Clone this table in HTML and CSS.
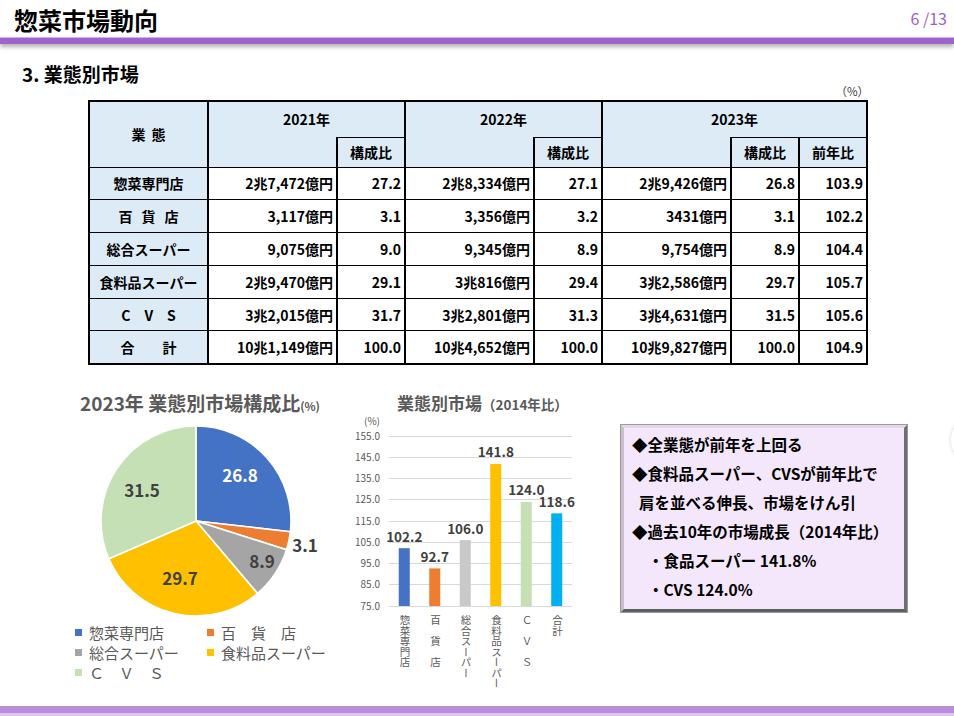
FILE: index.html
```html
<!DOCTYPE html>
<html lang="ja">
<head>
<meta charset="utf-8">
<title>惣菜市場動向</title>
<link rel="stylesheet" href="styles.css">
</head>
<body>
<header class="top">
  <h1 class="title">惣菜市場動向</h1>
  <div class="page">6 /13</div>
</header>
<div class="rule"></div>
<h2 class="section">3. 業態別市場</h2>
<div class="table-wrap">
  <div class="unit">（%）</div>
  <table class="market">
    <colgroup>
      <col class="c-name"><col class="c-val"><col class="c-pct"><col class="c-val"><col class="c-pct"><col class="c-val"><col class="c-pct"><col class="c-pct">
    </colgroup>
    <thead>
      <tr class="h1">
        <th rowspan="2" class="name-h"><span class="sp-gyo">業態</span></th>
        <th colspan="2" class="yr">2021年</th>
        <th colspan="2" class="yr">2022年</th>
        <th colspan="3" class="yr">2023年</th>
      </tr>
      <tr class="h2">
        <th class="blank"></th><th class="sub">構成比</th>
        <th class="blank"></th><th class="sub">構成比</th>
        <th class="blank"></th><th class="sub">構成比</th><th class="sub">前年比</th>
      </tr>
    </thead>
    <tbody>
      <tr><th>惣菜専門店</th><td>2兆7,472億円</td><td>27.2</td><td>2兆8,334億円</td><td>27.1</td><td>2兆9,426億円</td><td>26.8</td><td>103.9</td></tr>
      <tr><th><span class="sp-hyaku">百貨店</span></th><td>3,117億円</td><td>3.1</td><td>3,356億円</td><td>3.2</td><td>3431億円</td><td>3.1</td><td>102.2</td></tr>
      <tr><th>総合スーパー</th><td>9,075億円</td><td>9.0</td><td>9,345億円</td><td>8.9</td><td>9,754億円</td><td>8.9</td><td>104.4</td></tr>
      <tr><th>食料品スーパー</th><td>2兆9,470億円</td><td>29.1</td><td>3兆816億円</td><td>29.4</td><td>3兆2,586億円</td><td>29.7</td><td>105.7</td></tr>
      <tr><th>C　V　S</th><td>3兆2,015億円</td><td>31.7</td><td>3兆2,801億円</td><td>31.3</td><td>3兆4,631億円</td><td>31.5</td><td>105.6</td></tr>
      <tr><th>合　　計</th><td>10兆1,149億円</td><td>100.0</td><td>10兆4,652億円</td><td>100.0</td><td>10兆9,827億円</td><td>100.0</td><td>104.9</td></tr>
    </tbody>
  </table>
</div>

<section class="bottom">
  <div class="pie-block">
    <div class="pie-title">2023年 業態別市場構成比<small>(%)</small></div>
    <svg class="pie" width="230" height="200" viewBox="0 0 230 200">
      <g stroke="#fff" stroke-width="1.6" stroke-linejoin="round">
        <path fill="#4472c4" d="M100,100 L100,5 A95,95 0 0 1 194.39,110.72 Z"/>
        <path fill="#ed7d31" d="M100,100 L194.39,110.72 A95,95 0 0 1 190.53,128.79 Z"/>
        <path fill="#a5a5a5" d="M100,100 L190.53,128.79 A95,95 0 0 1 161.47,172.44 Z"/>
        <path fill="#ffc000" d="M100,100 L161.47,172.44 A95,95 0 0 1 12.81,137.73 Z"/>
        <path fill="#c5e0b4" d="M100,100 L12.81,137.73 A95,95 0 0 1 100,5 Z"/>
      </g>
      <g class="pie-lbl" text-anchor="middle">
        <text x="144" y="61" class="on-blue">26.8</text>
        <text x="46" y="76">31.5</text>
        <text x="84" y="164">29.7</text>
        <text x="166" y="147">8.9</text>
        <text x="209" y="131">3.1</text>
      </g>
    </svg>
    <div class="legend">
      <div class="lg"><i class="sq c-blue"></i>惣菜専門店</div>
      <div class="lg"><i class="sq c-orange"></i>百　貨　店</div>
      <div class="lg"><i class="sq c-grey"></i>総合スーパー</div>
      <div class="lg"><i class="sq c-yellow"></i>食料品スーパー</div>
      <div class="lg"><i class="sq c-green"></i>Ｃ　Ｖ　Ｓ</div>
    </div>
  </div>

  <div class="bar-block">
    <div class="bar-title">業態別市場<small>（2014年比）</small></div>
    <div class="bar-unit">(%)</div>
    <svg class="bars" width="230" height="185" viewBox="0 10 230 185">
      <g stroke="#d9d9d9" stroke-width="1">
        <line x1="37" x2="220" y1="19.5" y2="19.5"/>
        <line x1="37" x2="220" y1="40.5" y2="40.5"/>
        <line x1="37" x2="220" y1="61.5" y2="61.5"/>
        <line x1="37" x2="220" y1="82.5" y2="82.5"/>
        <line x1="37" x2="220" y1="104.5" y2="104.5"/>
        <line x1="37" x2="220" y1="125.5" y2="125.5"/>
        <line x1="37" x2="220" y1="146.5" y2="146.5"/>
        <line x1="37" x2="220" y1="167.5" y2="167.5"/>
        <line x1="37" x2="220" y1="189.5" y2="189.5"/>
      </g>
      <g class="ylbl" text-anchor="end">
        <text x="28" y="23">155.0</text>
        <text x="28" y="44">145.0</text>
        <text x="28" y="65">135.0</text>
        <text x="28" y="86">125.0</text>
        <text x="28" y="108">115.0</text>
        <text x="28" y="129">105.0</text>
        <text x="28" y="150">95.0</text>
        <text x="28" y="171">85.0</text>
        <text x="28" y="193">75.0</text>
      </g>
      <rect x="46.75" y="131.2" width="11" height="57.8" fill="#4472c4"/>
      <rect x="77.25" y="151.4" width="11" height="37.6" fill="#ed7d31"/>
      <rect x="107.75" y="123.1" width="11" height="65.9" fill="#c9c9c9"/>
      <rect x="138.25" y="47.05" width="11" height="141.95" fill="#ffc000"/>
      <rect x="168.75" y="84.9" width="11" height="104.1" fill="#c5e0b4"/>
      <rect x="199.25" y="96.35" width="11" height="92.65" fill="#00b0f0"/>
      <g class="vlbl" text-anchor="middle">
        <text x="52.25" y="124.5">102.2</text>
        <text x="82.75" y="144.5">92.7</text>
        <text x="113.25" y="116.5">106.0</text>
        <text x="143.75" y="40">141.8</text>
        <text x="174.25" y="78">124.0</text>
        <text x="204.75" y="89.5">118.6</text>
      </g>
    </svg>
    <div class="xlabels">
      <span>惣菜専門店</span>
      <span>百　貨　店</span>
      <span>総合スーパー</span>
      <span>食料品スーパー</span>
      <span>Ｃ　Ｖ　Ｓ</span>
      <span>合計</span>
    </div>
  </div>

  <div class="note">
    <p>◆全業態が前年を上回る</p>
    <p>◆食料品スーパー、CVSが前年比で</p>
    <p class="ind-half">肩を並べる伸長、市場をけん引</p>
    <p>◆過去10年の市場成長（2014年比）</p>
    <p class="ind-full">・食品スーパー 141.8%</p>
    <p class="ind-full">・CVS 124.0%</p>
  </div>
</section>

<div class="edge-circle"></div>
<footer class="foot"></footer>
</body>
</html>
```
FILE: styles.css
```css
* {
  box-sizing: border-box;
  margin: 0;
  padding: 0;
}

html, body {
  width: 954px;
  height: 716px;
  overflow: hidden;
  background: #fff;
}

body {
  font-family: "Noto Sans CJK JP", "Noto Sans", sans-serif;
  color: #000;
  position: relative;
  display: flex;
  flex-direction: column;
}

/* header */
.top {
  display: flex;
  justify-content: space-between;
  align-items: flex-start;
  height: 37px;
  padding: 5px 7px 0 14px;
}

.title {
  font-size: 24px;
  font-weight: bold;
  line-height: 30px;
}

.page {
  font-size: 16px;
  line-height: 20px;
  padding-top: 3px;
  color: #9b5fd0;
}

.rule {
  height: 7px;
  background: #a062d0;
  border-top: 1px solid #d0b2ea;
  box-shadow: 0 3px 4px rgba(0, 0, 0, 0.3);
}

.section {
  font-size: 19px;
  font-weight: bold;
  line-height: 20px;
  margin: 20px 0 0 22px;
}

/* table */
.table-wrap {
  margin-left: 88px;
  width: 781px;
}

.unit {
  text-align: right;
  font-size: 11.5px;
  line-height: 14px;
  color: #404040;
  margin-bottom: 2px;
}

.market {
  width: 777px;
  border-collapse: collapse;
  border: 2px solid #000;
  table-layout: fixed;
  font-size: 14px;
  font-weight: bold;
  line-height: 1;
}

.c-name { width: 119px; }
.c-val { width: 129px; }
.c-pct { width: 68px; }

.market th,
.market td {
  border-left: 2px solid #000;
  border-right: 2px solid #000;
  border-top: 1px solid #000;
  border-bottom: 1px solid #000;
  height: 32.8px;
  padding: 0 3px 0 0;
}

.market th {
  background: #ddebf7;
  text-align: center;
  padding: 0;
  font-weight: bold;
}

.market td {
  text-align: right;
  background: #fff;
}

.market .h1 th {
  height: 36px;
}

.market .h1 .yr {
  border-bottom: none;
}

.market .h2 th {
  height: 30px;
}

.market .h2 .blank {
  border-top: none;
}

.market .h2 .sub {
  border-top: 1px solid #000;
}

.sp-gyo {
  letter-spacing: 6px;
  padding-left: 6px;
}

.sp-hyaku {
  letter-spacing: 9px;
  padding-left: 9px;
}

/* bottom */
.bottom {
  display: flex;
  align-items: flex-start;
  margin-top: 27px;
}

.pie-block {
  width: 280px;
  margin-left: 72px;
}

.pie-title {
  padding-left: 8px;
  font-size: 19px;
  font-weight: bold;
  line-height: 22px;
  color: #595959;
  white-space: nowrap;
}

.pie-title small {
  font-size: 11.5px;
}

.pie {
  display: block;
  margin: 4px 0 0 24px;
}

.pie-lbl text {
  font-size: 17px;
  font-weight: bold;
  fill: #404040;
}

.pie-lbl .on-blue {
  fill: #fff;
}

.legend {
  display: grid;
  grid-template-columns: 132px 148px;
  margin: 2px 0 0 3px;
  font-size: 15px;
  line-height: 20px;
  color: #595959;
}

.lg {
  display: flex;
  align-items: center;
  white-space: nowrap;
}

.sq {
  display: inline-block;
  width: 7px;
  height: 7px;
  margin-right: 7px;
}

.c-blue { background: #4472c4; }
.c-orange { background: #ed7d31; }
.c-grey { background: #a5a5a5; }
.c-yellow { background: #ffc000; }
.c-green { background: #c5e0b4; }

.bar-block {
  width: 230px;
}

.bar-title {
  padding-left: 45px;
  font-size: 17px;
  font-weight: bold;
  line-height: 22px;
  color: #595959;
  white-space: nowrap;
}

.bar-title small {
  font-size: 13.5px;
}

.bar-unit {
  padding-left: 12px;
  font-size: 10px;
  line-height: 12px;
  height: 12px;
  color: #595959;
}

.bars {
  display: block;
  overflow: visible;
}

.ylbl text {
  font-size: 10px;
  fill: #595959;
}

.vlbl text {
  font-size: 13.5px;
  font-weight: bold;
  fill: #404040;
}

.xlabels {
  display: flex;
  padding-left: 37px;
  margin-top: 3px;
}

.xlabels span {
  width: 30.5px;
  writing-mode: vertical-rl;
  font-size: 10.5px;
  line-height: 30.5px;
  color: #595959;
  text-align: start;
}

/* note box */
.note {
  width: 286px;
  height: 187px;
  margin: 33px 0 0 39px;
  padding: 2px 0 0 8px;
  background: #f4e7fb;
  border-style: solid;
  border-width: 3px;
  border-color: #e2d8e6 #6f6f6f #5f5f5f #c9c0cc;
  box-shadow: 0 0 0 1px #9a9a9a;
  font-size: 15.5px;
  font-weight: bold;
  line-height: 29px;
  white-space: nowrap;
}

.ind-half {
  padding-left: 7px;
}

.ind-full {
  padding-left: 16px;
}

/* decorative circle at right edge */
.edge-circle {
  position: absolute;
  left: 951px;
  top: 417px;
  width: 46px;
  height: 46px;
  border-radius: 50%;
  background: #fff;
  box-shadow: 0 0 4px rgba(0, 0, 0, 0.18);
}

.foot {
  margin-top: auto;
  height: 10px;
  border-top: 7px solid #b98cdc;
  background: #dcc8ef;
}
```
